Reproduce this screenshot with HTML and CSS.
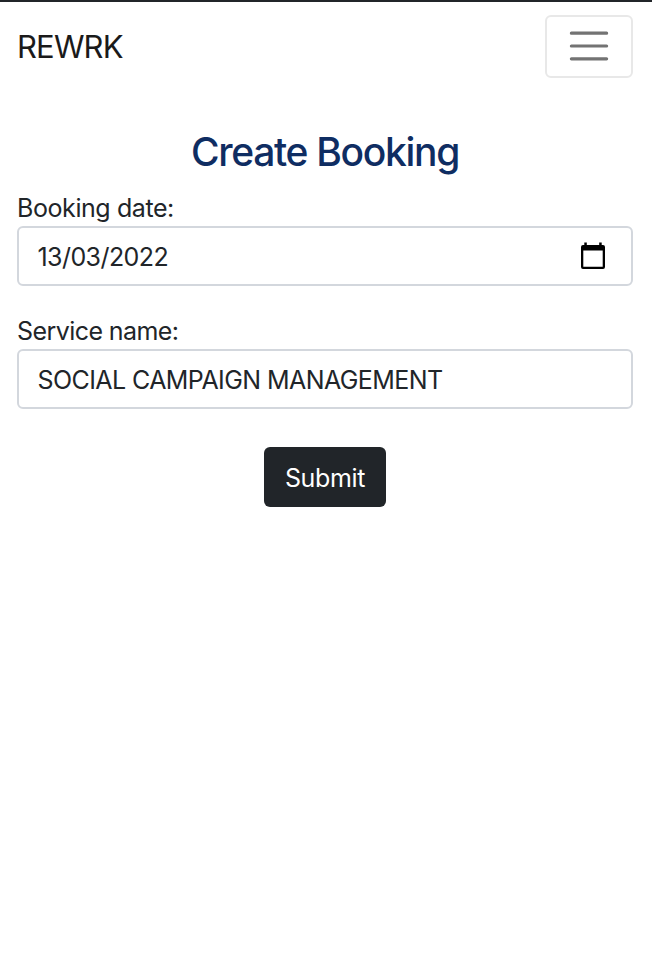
FILE: index.html
```html
<!DOCTYPE html>
<html lang="en">
<head>
<meta charset="utf-8">
<title>Create Booking</title>
<link rel="stylesheet" href="styles.css">
</head>
<body>
<header class="navbar">
  <a class="brand"><span>REWRK</span></a>
  <button class="toggler" type="button" aria-label="Menu">
    <svg width="48" height="48" viewBox="0 0 48 48"><path d="M6.400 11.200h35.200M6.400 24h35.200M6.400 36.800h35.200" fill="none" stroke="#737373" stroke-width="3.200" stroke-linecap="round"/></svg>
  </button>
</header>
<main class="content">
  <h1 class="title"><span>Create Booking</span></h1>
  <form class="form">
    <label class="label label-date">Booking date:</label>
    <div class="field">
      <span class="value value-date">13/03/2022</span>
      <svg class="calendar" width="24" height="28" viewBox="0 0 24 28"><path fill-rule="evenodd" d="M3.300.500h2.500V3h12.400V.500h2.500V3H22a2 2 0 0 1 2 2v20a2 2 0 0 1-2 2H2a2 2 0 0 1-2-2V5a2 2 0 0 1 2-2h1.300zM2.300 8.500v16.200h19.400V8.500z"/></svg>
    </div>
    <label class="label label-service">Service name:</label>
    <div class="field"><span class="value value-service">SOCIAL CAMPAIGN MANAGEMENT</span></div>
    <button class="submit" type="button"><span>Submit</span></button>
  </form>
</main>
</body>
</html>
```
FILE: styles.css
```css
* { box-sizing: border-box; }
body { margin: 0; min-height: 960px; background: #fff; border-top: 2px solid #212529; color: #212529; font-family: Inter, "Liberation Sans", sans-serif; font-size: 25px; line-height: 38px; }
.navbar { display: flex; justify-content: space-between; align-items: center; height: 88px; padding: 0 19px 0 17px; }
.brand { padding-top: 2px; color: #1a1a1a; font-size: 31px; letter-spacing: -.85px; }
.toggler { display: flex; align-items: center; justify-content: center; width: 88px; height: 63px; padding: 0; background: #fff; border: 2px solid #e8e8e8; border-radius: 6px; }
.content { padding: 38px 19px 0 17px; }
.title { margin: 0; height: 61px; line-height: 48px; text-align: center; color: #0f2d62; font-size: 39px; font-weight: 500; letter-spacing: -1.32px; }
.form { display: flex; flex-direction: column; }
.label { height: 37px; }
.label-date { letter-spacing: -.42px; }
.label-service { margin-top: 26px; letter-spacing: -.57px; }
.field { display: flex; justify-content: space-between; align-items: center; height: 60px; padding: 0 26px 0 18.5px; border: 2px solid #d3d7dd; border-radius: 6px; }
.value { padding-top: 2px; }
.value-date { letter-spacing: -.57px; }
.value-service { letter-spacing: -.58px; }
.submit { align-self: center; width: 122px; height: 60px; margin-top: 38px; padding: 2px 0 0; border: 0; border-radius: 6px; background: #212529; color: #fff; font: inherit; letter-spacing: -.35px; }
```
